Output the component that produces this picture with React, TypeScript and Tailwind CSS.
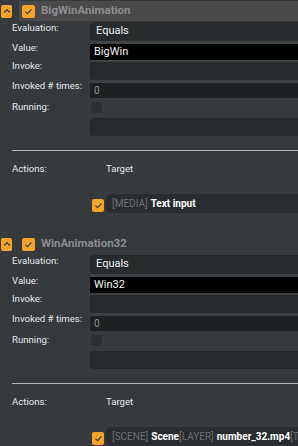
import React from 'react';

const orange = 'bg-[#f5a42a]';

function Check() {
  return (
    <svg viewBox="0 0 12 12" className="w-[9px] h-[9px]">
      <path d="M2 6.2 L4.8 9 L10 3.2" fill="none" stroke="#3a3a3a" strokeWidth="1.6" />
    </svg>
  );
}

function Chevron() {
  return (
    <svg viewBox="0 0 10 10" className="w-[8px] h-[8px]">
      <path d="M1.5 6.8 L5 3.2 L8.5 6.8" fill="none" stroke="#3a3a3a" strokeWidth="1.6" />
    </svg>
  );
}

interface SectionProps {
  title: string;
  value: string;
  selected?: boolean;
  target: React.ReactNode;
}

function Label({ children }: { children: React.ReactNode }) {
  return <div className="w-[78px] shrink-0 text-[9.6px] leading-[10px] text-[#e4e6e8]">{children}</div>;
}

function Section({ title, value, selected, target }: SectionProps) {
  return (
    <div className="pb-[20px]">
      {/* header */}
      <div className="flex items-center h-[21px] pt-px">
        <div className={`ml-px w-[11px] h-[13px] ${orange} rounded-[2px] flex items-center justify-center`}>
          <Chevron />
        </div>
        <div className={`flex-1 h-full flex items-center pl-[3px] ${selected ? 'bg-[#4a4a4a]' : ''} ml-[7px]`}>
          <div className={`w-[13px] h-[13px] ${orange} rounded-[2px] flex items-center justify-center`}>
            <Check />
          </div>
          <span className="ml-[6px] text-[11.5px] font-bold text-[#8b8d8f]">{title}</span>
        </div>
      </div>

      <div className="mt-px flex pl-[12px]">
        <Label>
          <div className="pt-[1px]">Evaluation:</div>
        </Label>
        <div className="flex-1 h-[19px] bg-[#272b2c] rounded-l-[4px] text-[11px] text-[#eef0f2] flex items-center pl-[6px]">
          Equals
        </div>
      </div>
      <div className="flex pl-[12px]">
        <Label>
          <div className="pt-[2px]">Value:</div>
        </Label>
        <div className="flex-1 border-t-[3px] border-[#3f4345]">
          <div className="h-[16px] bg-black text-[11px] text-[#f2f2f2] flex items-center pl-[4px]">{value}</div>
        </div>
      </div>
      <div className="flex pl-[12px]">
        <Label>
          <div className="pt-[1px]">Invoke:</div>
        </Label>
        <div className="flex-1 border-t-2 border-[#3f4345]">
          <div className="h-[18px] bg-[#272b2c] rounded-bl-[4px]" />
        </div>
      </div>
      <div className="flex pl-[12px]">
        <Label>
          <div className="pt-[1px] whitespace-nowrap">Invoked # times:</div>
        </Label>
        <div className="flex-1 border-t-[3px] border-[#3d4143]">
          <div className="h-[15px] bg-[#1e2122] text-[10px] text-[#8a8d90] flex items-center pl-[4px]">0</div>
        </div>
      </div>
      <div className="mt-[4px] flex pl-[12px]">
        <Label>
          <div>Running:</div>
        </Label>
        <div className="ml-px w-[11px] h-[11px] rounded-[2px] bg-[#2c3032]" />
      </div>
      <div className="mt-[5px] flex pl-[12px]">
        <div className="w-[78px] shrink-0" />
        <div className="flex-1 h-[18px] bg-[#282b2d] rounded-l-[4px]" />
      </div>

      <div className="mt-[14px] ml-[12px] h-px bg-[#b4b6b8]" />

      <div className="mt-[13px] flex pl-[12px] text-[9.6px] leading-[10px] text-[#e4e6e8]">
        <div className="w-[94px] shrink-0">Actions:</div>
        <div>Target</div>
      </div>

      <div className="mt-[20px] flex items-center pl-[92px]">
        <div className={`w-[12px] h-[13px] ${orange} rounded-[2px] flex items-center justify-center mt-[4px]`}>
          <Check />
        </div>
        <div className="ml-[2px] flex-1 h-[19px] bg-[#2a2d2f] rounded-l-[6px] flex items-center pl-[6px] text-[10px] whitespace-nowrap overflow-hidden">
          {target}
        </div>
      </div>
    </div>
  );
}

export default function App() {
  return (
    <div className="w-[298px] h-[446px] overflow-hidden bg-[#363a3d]" style={{ fontFamily: 'Roboto, "Liberation Sans", sans-serif' }}>
      <Section
        title="BigWinAnimation"
        value="BigWin"
        selected
        target={
          <>
            <span className="text-[#6d6f71]">[MEDIA]</span>
            <span className="ml-[3px] font-bold text-white">Text input</span>
          </>
        }
      />
      <Section
        title="WinAnimation32"
        value="Win32"
        target={
          <>
            <span className="text-[#6d6f71]">[SCENE]</span>
            <span className="ml-[3px] font-bold text-white">Scene</span>
            <span className="text-[#6d6f71]">[LAYER]</span>
            <span className="ml-[3px] font-bold text-white">number_32.mp4</span>
            <span className="text-[#6d6f71]">[TIMELINE]</span>
          </>
        }
      />
    </div>
  );
}
